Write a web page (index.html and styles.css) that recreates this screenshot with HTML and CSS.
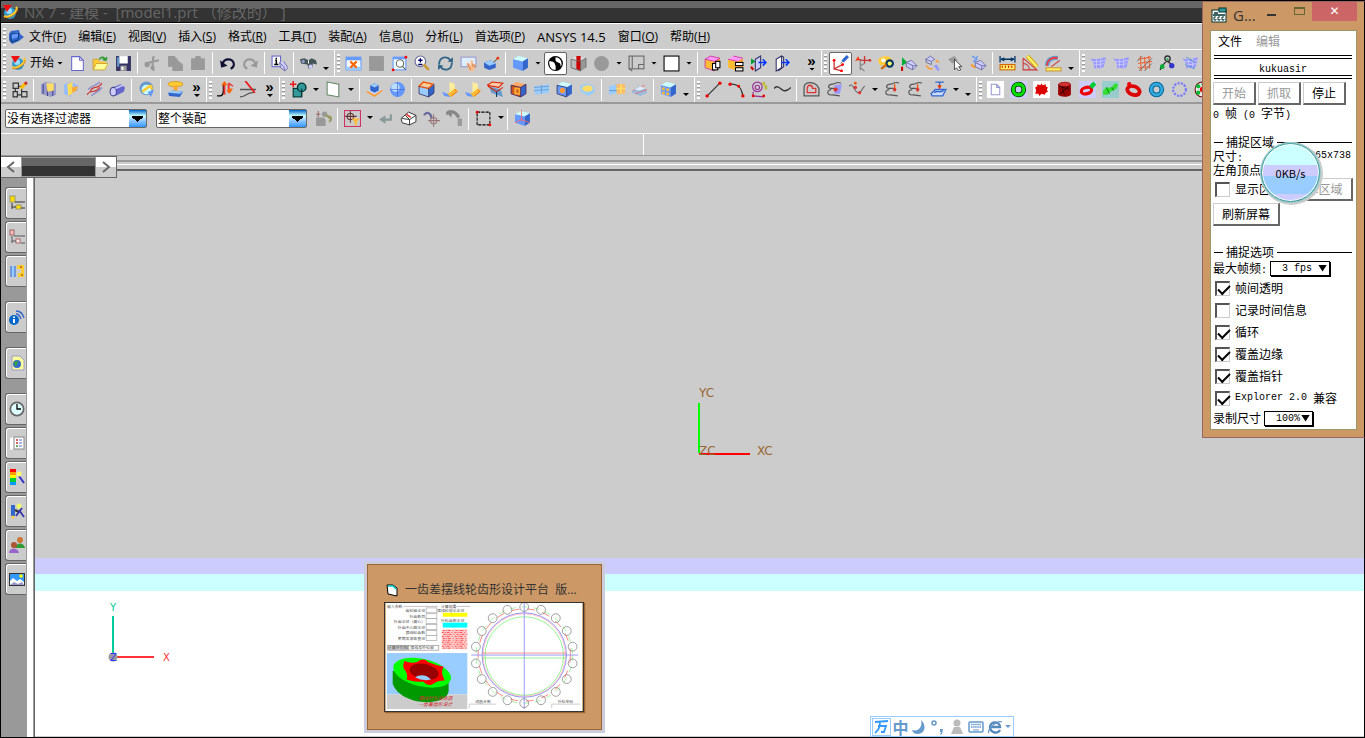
FILE: index.html
```
<!DOCTYPE html>
<html lang="zh">
	<head>
		<meta charset="utf-8">
		<title>NX 7 - 建模</title>
		<link rel="stylesheet" href="styles.css">
	</head>
	<body>
		<div class="app">
			<!--标题栏-->
			<div class="titlebar">
				<span class="ico" data-icon="nx"></span>
				<h1>NX 7 - 建模 -&nbsp; [model1.prt （修改的） ]</h1>
			</div>

			<!--菜单-->
			<div class="menubar">
				<i class="grip"></i>
				<span class="ico" data-icon="part"></span>
				<a href="#">文件(<u>F</u>)</a>
				<a href="#">编辑(<u>E</u>)</a>
				<a href="#">视图(<u>V</u>)</a>
				<a href="#">插入(<u>S</u>)</a>
				<a href="#">格式(<u>R</u>)</a>
				<a href="#">工具(<u>T</u>)</a>
				<a href="#">装配(<u>A</u>)</a>
				<a href="#">信息(<u>I</u>)</a>
				<a href="#">分析(<u>L</u>)</a>
				<a href="#">首选项(<u>P</u>)</a>
				<a href="#" class="wide">ANSYS 14.5</a>
				<a href="#">窗口(<u>O</u>)</a>
				<a href="#">帮助(<u>H</u>)</a>
			</div>

			<!--工具条-->
			<div class="row">
				<div class="bar">
					<i class="grip"></i>
					<button class="start"><span class="ico" data-icon="nx"></span>开始<i class="arrow"></i></button>
					<div class="tools" data-tools="new open save | cut copy paste | undo redo | info | bino _"></div>
				</div>
				<div class="bar">
					<i class="grip"></i>
					<div class="tools" data-tools="fit blank zoomwin zoom rotate pan persp | cube v *shade section disc v sheet v square v | boxcopy boxlink outflag outbox . »"></div>
				</div>
				<div class="bar">
					<i class="grip"></i>
					<div class="tools" data-tools="*csys csys2 palette showhide swap pick hide | ruler angle arcruler _"></div>
				</div>
				<div class="bar last">
					<i class="grip"></i>
					<div class="tools" data-tools="surf surf mesh chain surf2"></div>
				</div>
			</div>
			<div class="row">
				<div class="bar">
					<i class="grip"></i>
					<div class="tools" data-tools="sketch | extrude revolve sweep tube | gauge | table »"></div>
				</div>
				<div class="bar">
					<i class="grip"></i>
					<div class="tools" data-tools="bend trim »"></div>
				</div>
				<div class="bar">
					<i class="grip"></i>
					<div class="tools" data-tools="unite v plane v | datum sphere | blend draft draft rib shell split hole thick | pattern offset | grid _"></div>
				</div>
				<div class="bar">
					<i class="grip"></i>
					<div class="tools" data-tools="line arc circles spline | contour curve1 curve2 v curve3 curve3 project v _"></div>
				</div>
				<div class="bar last">
					<i class="grip"></i>
					<div class="tools" data-tools="page ringg star drum worm bolt ringr ringb gear bearing"></div>
				</div>
			</div>

			<!--选择条-->
			<div class="selbar">
				<select class="combo" aria-label="过滤器"><option>没有选择过滤器</option></select>
				<select class="combo second" aria-label="范围"><option>整个装配</option></select>
				<div class="tools" data-tools="links | snap v back facet snapcurve snapgray | marquee v | cubeline"></div>
			</div>

			<div class="status"><span></span><span></span></div>

			<div class="tabstrip">
				<div class="pager">
					<button aria-label="上一页"><svg viewBox="0 0 16 16"><path d="M11 3L5 8L11 13" fill="none" stroke="#666" stroke-width="2"/></svg></button>
					<div class="track"></div>
					<button aria-label="下一页"><svg viewBox="0 0 16 16"><path d="M5 3L11 8L5 13" fill="none" stroke="#666" stroke-width="2"/></svg></button>
				</div>
				<div class="edge"></div>
			</div>

			<div class="work">
				<div class="side">
					<button class="tab" data-icon="tree" aria-label="装配导航器"></button>
					<button class="tab" data-icon="tree2" aria-label="约束导航器"></button>
					<button class="tab gap" data-icon="reuse" aria-label="重用库"></button>
					<button class="tab gap" data-icon="radio" aria-label="信息"></button>
					<button class="tab gap" data-icon="web" aria-label="浏览器"></button>
					<button class="tab" data-icon="clock" aria-label="历史记录"></button>
					<button class="tab" data-icon="book" aria-label="系统材料"></button>
					<button class="tab" data-icon="rainbow" aria-label="过程向导"></button>
					<button class="tab" data-icon="wizard" aria-label="加工向导"></button>
					<button class="tab" data-icon="people" aria-label="角色"></button>
					<button class="tab" data-icon="picture" aria-label="系统场景"></button>
				</div>
				<div class="canvas">
					<svg class="wcs" viewBox="0 0 90 80">
						<path d="M9 18V68" stroke="#0f0" stroke-width="2"/>
						<path d="M9 69H60" stroke="#f00" stroke-width="2"/>
						<g class="wcsText"><text x="9" y="12">YC</text><text x="9" y="70">ZC</text><text x="67" y="70">XC</text></g>
					</svg>
					<svg class="triad" viewBox="0 0 70 70">
						<path d="M8 16V54" stroke="#0c9" stroke-width="2"/>
						<path d="M12 57H49" stroke="#f33" stroke-width="2"/>
						<circle cx="8" cy="57" r="4.5" fill="#999"/>
						<text x="5" y="11" fill="#0c9">Y</text><text x="5" y="61" fill="#33f">Z</text><text x="58" y="61" fill="#f33">X</text>
					</svg>
				</div>
			</div>
		</div>

		<!--任务栏预览-->
		<div class="preview">
			<div class="previewTitle"><span class="ico" data-icon="form"></span><span>一齿差摆线轮齿形设计平台&nbsp; 版...</span></div>
			<svg class="thumb" viewBox="0 0 200 110">
				<rect width="200" height="110" fill="#fff"/>
				<g class="tiny" text-anchor="end">
					<text x="17" y="5">输入参数</text><text x="40" y="9">齿轮轴半径</text><text x="40" y="15">针齿数目</text><text x="40" y="20">针齿半径（偏心）</text><text x="40" y="26">针齿中心圆半径</text><text x="40" y="32">摆线轮齿数</text><text x="40" y="38">套筒及滚珠直径</text>
					<text x="72" y="5">计算结果</text><text x="80" y="9">摆线轮理论半径</text><text x="80" y="19">针轮齿数半径</text>
				</g>
				<g fill="#fff" stroke="#999" stroke-width=".6"><path d="M18 3.500H53M72 3.500H86"/><rect x="41" y="5" width="11" height="5"/><rect x="41" y="11" width="11" height="5"/><rect x="41" y="16" width="11" height="5"/><rect x="41" y="22" width="11" height="5"/><rect x="41" y="28" width="11" height="5"/><rect x="41" y="33" width="11" height="5"/></g>
				<rect x="58" y="10" width="25" height="4" fill="#ff0"/><rect x="58" y="20" width="25" height="5" fill="#0ff"/>
				<rect x="57" y="27" width="26" height="20" fill="#fcc"/>
				<path d="M58 28H83M57 30H82M59 32H83M57 34H83M58 36H82M58 38H83M57 40H82M59 42H83M57 44H81M58 46H82" stroke="#f55" stroke-width="1" stroke-dasharray="2 1 1 1 3 2 1 2"/>
				<rect x="2" y="43" width="20" height="5" fill="#ccc" stroke="#666" stroke-width=".5"/><rect x="23" y="43" width="31" height="5" fill="#fff" stroke="#666" stroke-width=".5"/>
				<g class="tiny"><text x="2" y="47">计算并作图</text><text x="25" y="47">摆线及外轮廓</text></g>
				<rect x="1" y="51" width="82" height="42" fill="#9cf"/><rect x="1" y="93" width="82" height="15" fill="#ccc"/>
				<path d="M7 69V82C11 94 26 101 42 101C56 101 63 96 64 90V76z" fill="#090"/>
				<ellipse cx="37" cy="71" rx="30" ry="14" transform="rotate(13 37 71)" fill="#0f0"/>
				<path d="M19 59Q26 62 32 60Q38 55 43 60Q50 63 59 65Q55 70 60 79Q52 79 49 82Q43 86 38 80Q30 81 21 78Q23 74 20 69Q16 65 19 59" fill="#f00"/>
				<ellipse cx="39" cy="70" rx="15" ry="8" transform="rotate(12 39 70)" fill="#900"/>
				<path d="M30 76C34 72 42 73 46 78Q38 80 30 76" fill="#9cf"/>
				<g class="slogan"><text x="33" y="99">摆线针轮减速器</text><text x="33" y="105">一齿差齿形设计</text></g>
				<g id="gear" fill="none">
					<circle cx="141" cy="53" r="43" stroke="#66f" stroke-width=".7"/>
					<circle cx="141" cy="54" r="40" stroke="#6e6" stroke-width=".7"/>
					<circle cx="141" cy="53" r="42" stroke="#f88" stroke-width=".5"/>
					<circle cx="141" cy="53" r="47" stroke="#f66" stroke-width=".8" stroke-dasharray="8 8"/>
					<circle cx="141" cy="53" r="49" stroke="#6e6" stroke-width=".6" stroke-dasharray="6 6"/>
					<path d="M87 53H196M141 0V108" stroke="#99f"/><path d="M98 51H184" stroke="#f66" stroke-width=".7"/><path d="M98 56H184" stroke="#6e6" stroke-width=".7"/>
				</g>
				<g class="tiny"><text x="91" y="102">动画步数</text><text x="175" y="102">针轮坐标</text></g>
				<path d="M85 107V103H112M169 107V103H198" fill="none" stroke="#999" stroke-width=".5"/>
			</svg>
		</div>

		<!--输入法-->
		<div class="ime">
			<button class="on" data-icon="wan" aria-label="万能"></button>
			<button>中</button>
			<button data-icon="moon" aria-label="半角"></button>
			<button data-icon="punct" aria-label="标点"></button>
			<button data-icon="user" aria-label="用户"></button>
			<button data-icon="keys" aria-label="软键盘"></button>
			<button data-icon="ie" aria-label="浏览器"></button>
			<button class="drop-more" aria-label="更多"><i class="arrow"></i></button>
		</div>

		<!--录屏窗口-->
		<div class="recorder">
			<div class="recTitle">
				<span class="ico" data-icon="gif"></span><span class="name">G...</span>
				<button class="min" aria-label="最小化"></button><button class="max" aria-label="最大化"></button><button class="close" aria-label="关闭">✕</button>
			</div>
			<div class="recBody">
				<div class="recMenu"><a href="#">文件</a><a href="#" class="off">编辑</a></div>
				<div class="user"><span class="en">kukuasir</span></div>
				<div class="btns"><button disabled>开始</button><button disabled>抓取</button><button>停止</button></div>
				<p class="frames"><span class="en">0 </span>帧<span class="en"> (0 </span>字节<span class="en">)</span></p>
				<h2>捕捉区域</h2>
				<p class="line"><span>尺寸<span class="en">:</span></span><span class="en">1365x738</span></p>
				<p class="line"><span>左角顶点<span class="en">:</span></span></p>
				<div class="area"><label class="check"><input type="checkbox">显示区域</label><button disabled>选择区域</button></div>
				<button class="refresh">刷新屏幕</button>
				<h2>捕捉选项</h2>
				<div class="field"><label for="fps">最大帧频<span class="en">:</span></label><span class="drop"><select id="fps"><option>3 fps</option></select></span></div>
				<label class="check"><input type="checkbox" checked>帧间透明</label>
				<label class="check"><input type="checkbox">记录时间信息</label>
				<label class="check"><input type="checkbox" checked>循环</label>
				<label class="check"><input type="checkbox" checked>覆盖边缘</label>
				<label class="check"><input type="checkbox" checked>覆盖指针</label>
				<label class="check"><input type="checkbox" checked><span class="en">Explorer 2.0 </span>兼容</label>
				<div class="field size"><label for="size">录制尺寸</label><span class="drop"><select id="size"><option>100%</option></select></span></div>
			</div>
			<div class="ball">0KB/s</div>
		</div>

		<script type="text/javascript" src="icons.js"></script>
	</body>
</html>
```
FILE: styles.css
```
* {
	margin: 0;
	padding: 0;
	box-sizing: border-box;
}

body {
	background: #ccc;
	color: #000;
	font: 12px/16px "Open Sans", "Noto Sans CJK SC", sans-serif;
	position: relative;
	height: 100vh;
	overflow: hidden;
}

button,
select,
input {
	font: inherit;
	color: inherit;
	background: none;
	border: none;
	border-radius: 0;
	appearance: none;
}

a {
	color: inherit;
	text-decoration: none;
}

svg {
	display: block;
}

.ico svg {
	width: 16px;
	height: 16px;
}

.app {
	display: flex;
	flex-direction: column;
	height: 100vh;
	border: 1px solid #000;
}

/* 标题栏 */
.titlebar {
	display: flex;
	align-items: center;
	height: 22px;
	flex: none;
	padding-left: 1px;
	gap: 6px;
	background: linear-gradient(#666 7px, #333 7px);
	border-bottom: 1px solid #000;
	overflow: hidden;
}

.titlebar h1 {
	font-size: 15px;
	font-weight: normal;
	line-height: 20px;
	color: #666;
}

/* 菜单 */
.menubar {
	display: flex;
	align-items: center;
	height: 27px;
	flex: none;
	border-top: 1px solid #fff;
	border-bottom: 1px solid #fff;
	white-space: nowrap;
}

.menubar .ico {
	margin-right: 5px;
}

.menubar a {
	margin-right: 12px;
}

.menubar .wide {
	font-size: 13px;
}

/* 工具条 */
.row {
	display: flex;
	height: 27px;
	flex: none;
	overflow: hidden;
	border-bottom: 1px solid #fff;
}

.row + .row {
	border-bottom: 2px solid #999;
}

.bar {
	display: flex;
	align-items: center;
	flex: none;
	padding-right: 2px;
	border-right: 1px solid #fff;
}

.last {
	border: none;
}

.grip {
	width: 3px;
	height: 18px;
	margin: 0 2px;
	flex: none;
	background: repeating-linear-gradient(#fff 0 2px, #999 2px 3px, #ccc 3px 4px);
}

.tools {
	display: flex;
	align-items: center;
	height: 100%;
}

.tool {
	width: 23px;
	height: 23px;
	padding: 3px;
	flex: none;
}

.tool svg {
	width: 17px;
	height: 17px;
}

.selected {
	background: #fff;
	border: 1px solid #666;
	border-radius: 2px;
	padding: 2px;
}

.sep {
	width: 1px;
	height: 22px;
	margin: 0 3px 0 2px;
	background: #fff;
}

.arrow {
	width: 12px;
	height: 3px;
	background: #000;
	clip-path: polygon(3px 0, 9px 0, 6px 3px);
}

.low {
	align-self: flex-end;
	margin-bottom: 6px;
}

.space {
	width: 9px;
}

.more {
	width: 17px;
	padding-left: 2px;
	font: bold 15px/10px "Liberation Sans", sans-serif;
	text-align: center;
}

.more .arrow {
	display: block;
	margin: 2px 0 0 2px;
}

.start {
	display: flex;
	align-items: center;
	width: 58px;
	gap: 4px;
	padding-left: 2px;
	white-space: nowrap;
}

.start .arrow {
	margin-left: -4px;
	flex: none;
}

/* 选择条 */
.selbar {
	display: flex;
	align-items: center;
	height: 30px;
	flex: none;
	padding-left: 4px;
	border-bottom: 1px solid #fff;
}

.combo {
	width: 142px;
	height: 19px;
	padding-left: 1px;
	border: 1px solid #666;
	border-radius: 2px;
	background-image: conic-gradient(from -50deg at 50% 100%, #000 100deg, #0000 0), linear-gradient(#06c, #cff 35%, #9cf 60%, #39f), linear-gradient(#fff, #fff);
	background-repeat: no-repeat;
	background-position: right 3px top 6px, right, left;
	background-size: 11px 6px, 17px 100%, 100% 100%;
}

.second {
	width: 151px;
	margin: 0 5px 0 9px;
}

.selbar .arrow {
	width: 10px;
	margin-bottom: 2px;
}

.status {
	display: flex;
	height: 22px;
	flex: none;
	border-bottom: 1px solid #999;
}

.status span {
	flex: 1;
}

.status span:first-child {
	flex: 0 0 643px;
	border-right: 1px solid #fff;
}

.tabstrip {
	display: flex;
	height: 22px;
	flex: none;
}

.pager {
	display: flex;
	width: 116px;
	border: 1px solid #666;
	border-left: none;
}

.pager button {
	width: 20px;
	padding: 2px;
	background: linear-gradient(#fff 50%, #ccc 50%);
}

.pager .track {
	flex: 1;
	border: 1px solid #999;
	background: linear-gradient(#666 8px, #333 8px);
}

.edge {
	flex: 1;
	background: linear-gradient(#ccc 4px, #999 4px 6px, #ccc 6px 8px, #fff 8px 9px, #ccc 9px 13px, #666 13px 15px, #ccc 15px);
}

/* 工作区 */
.work {
	display: flex;
	flex: 1;
	min-height: 0;
}

.side {
	width: 34px;
	padding: 9px 0 0 4px;
	background: linear-gradient(90deg, #999 26px, #fff 26px 32px, #999 32px 33px, #666 33px);
}

.tab {
	display: block;
	width: 21px;
	height: 32px;
	margin-bottom: 2px;
	padding: 0 0 0 3px;
	background: #ccc;
	border: 1px solid #666;
	border-right: none;
	border-radius: 3px 0 0 3px;
	box-shadow: inset 1px 1px #fff;
}

.tab.gap {
	margin-bottom: 14px;
}

.tab svg {
	width: 16px;
	height: 16px;
}

.canvas {
	flex: 1;
	position: relative;
	background: linear-gradient(#ccc 380px, #ccf 380px 396px, #cff 396px 413px, #fff 413px);
	border-bottom: 1px solid #ccc;
}

.wcs {
	position: absolute;
	left: 655px;
	top: 207px;
	width: 90px;
	height: 80px;
}

.wcsText {
	font: 12px "DejaVu Sans", sans-serif;
	fill: #963;
}

.triad {
	position: absolute;
	left: 70px;
	top: 422px;
	width: 70px;
	height: 70px;
	font: 10px "DejaVu Sans", sans-serif;
}

/* 任务栏预览 */
.preview {
	position: absolute;
	left: 367px;
	top: 564px;
	width: 235px;
	padding: 16px 16px 17px;
	background: #c96;
	border: 1px solid #963;
	box-shadow: 0 0 0 3px #ccd;
}

.previewTitle {
	display: flex;
	align-items: center;
	gap: 5px;
	height: 18px;
	margin-bottom: 3px;
	white-space: nowrap;
	color: #333;
}

.thumb {
	width: 200px;
	height: 110px;
	border: 1px solid #333;
	box-shadow: 1px 1px 1px #963;
}

.tiny {
	font-size: 4px;
	fill: #555;
}

.slogan {
	font: italic 5px "Noto Sans CJK SC", sans-serif;
	fill: #c33;
}

/* 输入法 */
.ime {
	position: absolute;
	left: 870px;
	bottom: 1px;
	height: 21px;
	display: flex;
	align-items: center;
	background: #fff;
	border: 1px solid #9cf;
	padding-left: 1px;
	color: #69c;
}

.ime button {
	width: 19px;
	height: 18px;
	padding: 1px;
	font: bold 16px/16px "Noto Sans CJK SC", sans-serif;
}

.ime svg {
	width: 16px;
	height: 16px;
}

.ime .on {
	border: 1px solid #9cf;
	padding: 0;
}

.ime .drop-more {
	width: 8px;
}

.ime .arrow {
	display: block;
	background: #69c;
	margin-left: -4px;
}

/* 录屏窗口 */
.recorder {
	position: absolute;
	right: 0;
	top: 1px;
	width: 163px;
	padding: 0 7px 7px;
	background: #c96;
	border: 1px solid #966;
	border-right-color: #000;
	font-family: "Noto Sans CJK SC", sans-serif;
}

.recTitle {
	display: flex;
	height: 28px;
	padding-left: 1px;
	white-space: nowrap;
}

.recTitle .ico {
	padding-top: 5px;
	margin-right: 6px;
}

.recTitle .name {
	font: 15px/26px "Open Sans", sans-serif;
	color: #333;
	flex: 1;
}

.min {
	width: 9px;
	height: 2px;
	margin: 12px 18px 0 0;
	background: #333;
}

.max {
	width: 11px;
	height: 8px;
	margin: 5px 7px 0 0;
	border: 1px solid #663;
	border-top-width: 2px;
}

.close {
	width: 45px;
	height: 19px;
	background: #c66;
	color: #fff;
	font: 12px/19px "DejaVu Sans", sans-serif;
}

.recBody {
	background: #fff;
	border: 1px solid #996;
	padding: 0 3px 2px 2px;
	white-space: nowrap;
}

.en {
	font: 10px/12px "Liberation Mono", monospace;
	white-space: pre;
}

.recMenu {
	display: flex;
	gap: 14px;
	padding: 2px 5px 6px;
}

.off {
	color: #999;
}

.user {
	margin: 0 1px;
	border: double #000;
	border-width: 4px 0;
	text-align: center;
	height: 24px;
	line-height: 16px;
}

.btns {
	display: flex;
	gap: 2px;
	padding: 3px 0 0;
}

.recBody button {
	height: 23px;
	width: 43px;
	background: #fff;
	border: 1px solid #ccc;
	border-right: 2px solid #666;
	border-bottom: 2px solid #666;
}

.recBody button:disabled {
	color: #999;
}

.frames {
	height: 30px;
}

h2 {
	display: flex;
	align-items: center;
	gap: 3px;
	height: 14px;
	font-size: 12px;
	font-weight: normal;
}

h2::before,
h2::after {
	content: "";
	height: 1px;
	width: 9px;
	margin-left: 1px;
	background: #000;
}

h2::after {
	flex: 1;
	margin: 0 1px 0 0;
}

.line {
	display: flex;
	align-items: center;
	justify-content: space-between;
	height: 14px;
	padding-right: 2px;
}

.area {
	display: flex;
	align-items: center;
	justify-content: space-between;
	height: 24px;
}

.area button {
	width: 68px;
}

.recBody .refresh {
	display: block;
	width: 67px;
	margin: 2px 0 19px;
}

.check {
	display: flex;
	align-items: center;
	height: 22px;
	padding-left: 2px;
}

.check input {
	width: 15px;
	height: 15px;
	margin-right: 5px;
	border: 1px solid #ccc;
	border-top: 2px solid #555;
	border-left: 2px solid #555;
}

.check input:checked::before {
	content: "";
	display: block;
	width: 10px;
	height: 5px;
	margin: 2px 0 0 1px;
	border: solid #000;
	border-width: 0 0 2px 2px;
	transform: rotate(-45deg);
}

.field {
	display: flex;
	align-items: center;
	gap: 3px;
	height: 18px;
}

.drop {
	display: flex;
	align-items: center;
	position: relative;
	height: 15px;
	width: 60px;
	border: 1px solid #000;
	box-shadow: 1px 1px #000;
}

.drop select {
	width: 100%;
	padding-left: 11px;
	font: 10px/13px "Liberation Mono", monospace;
}

.drop::after {
	content: "";
	position: absolute;
	right: 2px;
	top: 3px;
	width: 9px;
	height: 7px;
	background: #000;
	clip-path: polygon(0 0, 100% 0, 50% 100%);
}

.size .drop {
	width: 49px;
}

.ball {
	position: absolute;
	left: 58px;
	top: 141px;
	width: 59px;
	height: 59px;
	border: 1px solid #399;
	border-radius: 50%;
	background: linear-gradient(#cff 21px, #ccf 21px 32px, #9cf 32px 50px, #ccf 50px);
	box-shadow: inset 0 0 0 1px #fff, 0 0 0 1px #9cc, 1px 1px 0 2px #ccc;
	font-size: 11px;
	line-height: 58px;
	text-align: center;
}
```
FILE: icons.js
```
// 三面立方体: 顶面, 左面, 右面
function cube(a, b, c) {
	return '<path d="M1 4L6 1L15 3L10 6z" fill="' + a + '"/><path d="M1 4L10 6V15L1 12z" fill="' + b + '"/><path d="M10 6L15 3V12L10 15z" fill="' + c + '"/>';
}
// 线条
function ln(d, c, w) {
	return '<path d="' + d + '" fill="none" stroke="' + c + '" stroke-width="' + (w || 1) + '"/>';
}
// 填充
function fl(d, c) {
	return '<path d="' + d + '" fill="' + c + '"/>';
}
function dot(x, y, c, r) {
	return '<circle cx="' + x + '" cy="' + y + '" r="' + (r || 1.3) + '" fill="' + c + '"/>';
}
function box(x, y, w, h, c, s) {
	return '<rect x="' + x + '" y="' + y + '" width="' + w + '" height="' + h + '" fill="' + c + '"' + (s ? ' stroke="' + s + '"' : '') + '/>';
}

var blue = cube('#cff', '#69f', '#36c');
var eraser = fl('M5 7L10 5L15 10L11 14L5 11z', '#ccf') + ln('M5 7L11 10L15 10M11 10V14L5 11V7L10 5L15 10L11 14', '#669', .8);
var hook = ln('M14 2C10 0 9 3 6 3C2 3 1 7 5 7H9M5 8C0 9 1 14 6 13L13 14', '#555', 1.1);
var surf = fl('M0 3C5 5 10 3 15 2L13 11C10 14 6 11 4 13C4 8 3 6 0 3', '#99f') + ln('M2 6C7 7 11 6 14 5M4 9C8 9 11 9 13 8M6 4V12M10 3V12', '#ccf', .8);

var icons = {
	nx: dot(8, 9, '#39c', 6) + dot(7, 7, '#9df', 3) + ln('M2 12C7 15 17 7 14 3', '#fc3', 2.2) + ln('M2 13C8 16 16 9 15 5', '#c60', .7) + fl('M1 1L10 1L5 8z', '#e11'),
	part: fl('M3 2L11 1L12 5L16 8L11 12L4 15L1 11V5z', '#36c') + fl('M3 5L10 3V8L4 10z', '#69f') + ln('M3 5L11 4L10 11L3 13z', '#036', .8),
	'new': fl('M2 1H10L14 5V15H2z', '#fff') + ln('M2.5 1.5H10L13.5 5V14.5H2.5zM10 1V5H14', '#66c'),
	open: fl('M1 4H6L7 6H13V14H1z', '#fc3') + fl('M4 8H16L12 14H1z', '#ff9') + ln('M1 14V4H6L7 6M4 8H15L12 14H1z', '#c93', .8) + ln('M7 4C9 1 12 2 13 5M10 4L13 5L14 2', '#393', 1.5),
	save: box(1, 1, 14, 14, '#336') + box(4, 1, 8, 7, '#fff') + box(5, 10, 6, 5, '#999') + box(6, 11, 2, 3, '#fff') + box(2, 2, 2, 9, '#69c'),
	cut: ln('M1 8L14 5M9 1L8 8L9 15', '#999', 2) + dot(3, 9, '#999', 2.5) + dot(8, 12, '#999', 2),
	copy: fl('M1 1H7L10 4V11H1z', '#999') + fl('M5 5H10L15 9V15H5z', '#999'),
	paste: fl('M1 3H5V1H10V3H14V14H1z', '#999'),
	undo: ln('M3 9C5 2 14 3 14 9C14 11 13 12 11 13', '#113', 2) + fl('M1 5L2 12L8 10z', '#113'),
	redo: ln('M13 9C11 2 2 3 2 9C2 11 3 12 5 13', '#999', 2) + fl('M15 5L14 12L8 10z', '#999'),
	info: box(1, 1, 8, 10, '#fff', '#66c') + ln('M4 5H5V9M3 9H7M5 2.500V3.800', '#000', 1.4) + fl('M8 7L12 6L16 12L13 15L9 12z', '#ccf') + ln('M8 7L12 11L13 15L9 12zM12 6L16 12L13 15', '#669', .8),
	bino: fl('M0 4L4 3L8 5L11 3L15 5L16 9L12 8L12 12L8 13L7 9L1 8z', '#455') + dot(10, 11, '#ccf', 2) + dot(3, 6, '#99c', 1.5) + ln('M8 5V8', '#fff'),
	fit: box(1, 2, 14, 12, '#fff', '#69f') + box(1, 2, 14, 3, '#69f') + box(1, 11, 14, 3, '#9cf') + ln('M5 6L11 12M11 6L5 12', '#f60', 2),
	blank: box(1, 1, 14, 14, '#999'),
	zoomwin: box(2, 2, 12, 12, '#eff', '#69f') + box(2, 2, 12, 2, '#69f') + dot(8, 8, '#fff', 3.5) + ln('M11 11L14 14M5 8A3.5 3.5 0 1 0 12 8A3.5 3.5 0 1 0 5 8', '#666') + dot(14, 2, '#f00') + dot(2, 14, '#f00'),
	zoom: dot(6, 6, '#fff', 5) + ln('M6 1A5 5 0 1 0 6 11A5 5 0 1 0 6 1', '#669') + ln('M6 3V7M4 5H8M4 9H8', '#006', 1.3) + ln('M9 9L14 14', '#c93', 2.5),
	rotate: ln('M2 9C2 2 9 0 13 5M14 7C14 14 7 16 3 11', '#368', 1.7) + fl('M10 6L15 7L15 2zM6 10L1 9L1 14z', '#368'),
	pan: box(1, 2, 14, 9, '#def', '#99c') + fl('M6 8L8 7L10 10V5L12 5L12 8L15 9L13 15H9z', '#fb8') + ln('M7 8L10 14M12 8V11M14 9V12', '#a64', .7),
	persp: fl('M1 7L7 5L12 8V12L6 14L1 12z', '#36c') + fl('M1 7L7 5L12 8L6 10z', '#9cf') + ln('M10 7L14 3', '#666') + dot(14, 3, '#f30'),
	cube: blue,
	shade: dot(8, 8, '#000', 7) + fl('M8 2C13 2 15 8 13 11C13 6 9 8 8 5z', '#fff') + fl('M2 6C6 5 9 8 8 14C4 14 2 11 2 6', '#fff') + fl('M8 9C9 8 11 8 12 9L10 13z', '#000'),
	section: cube('#ddd', '#bbb', '#999') + fl('M6 1H10V15L6 13z', '#c00') + ln('M1 4L10 6V15L1 12zM10 6L15 3V12', '#666', .8),
	disc: dot(8, 8, '#999', 7),
	sheet: box(1, 1, 14, 12, '#ccc', '#666') + ln('M4 1V13M10 13V9H15M1 13L4 15', '#666'),
	square: box(1, 1, 14, 14, '#fff', '#000'),
	boxcopy: cube('#f9f', '#fb3', '#f93') + ln('M1 4L10 6V15L1 12zL6 1L15 3L10 6', '#c39', .8) + box(8, 8, 5, 6, '#fff', '#000') + box(11, 6, 4, 6, '#fff', '#000'),
	boxlink: cube('#f9f', '#fb3', '#f93') + ln('M1 4L10 6M6 1L15 3', '#c39', .8) + box(8, 7, 7, 3, '#fff', '#000') + box(8, 12, 7, 3, '#fff', '#000'),
	outflag: fl('M1 3L5 6L1 9z', '#093') + ln('M1 11L3 14', '#c00', 2) + fl('M5 4L10 1V12L5 15z', '#ccf') + ln('M5 4L10 1V12L5 15z', '#336') + ln('M8 7H14M12 4L15 7L12 10', '#03f', 1.4),
	outbox: fl('M3 4L8 1V12L3 15z', '#fff') + ln('M3 4L8 1V12L3 15zM8 1L10 2V11L5 15', '#336') + ln('M8 7H14M12 4L15 7L12 10', '#03f', 1.4),
	csys: ln('M2 5V13L10 9M2 13L9 15', '#c33', 1.2) + dot(2, 5, '#f00') + dot(10, 9, '#f00') + dot(9, 15, '#f00') + ln('M8 8L11 5', '#999') + ln('M10 6L15 1', '#36c', 3),
	csys2: ln('M5 5V14M5 10L9 8M5 12L9 15', '#888', 1.2) + ln('M2 4L7 5L14 5M9 1V8', '#c33', 1.2) + fl('M0 6L4 4L3 1z', '#f30') + dot(14, 5, '#c33'),
	palette: fl('M0 5C2 0 11 0 13 4L11 11L4 9L2 10z', '#fc3') + dot(5, 5, '#fff', 2) + dot(11, 8, '#036', 4) + dot(11, 8, '#ff6', 2) + ln('M3 13L8 9', '#c60', 2),
	showhide: fl('M1 2L6 7L1 10z', '#0a3') + ln('M1 11V15', '#c00', 2) + eraser,
	swap: fl('M1 4L6 1L10 4L7 8z', '#ccf') + ln('M1 4L7 6L10 4M7 6V9L2 7V4L6 1L10 4', '#669', .8) + ln('M2 10L5 13H8M11 5L14 7', '#f93', 1.5) + fl('M9 10L12 9L15 14L13 15z', '#99f'),
	pick: fl('M1 4L7 1L10 5L5 8z', '#999') + fl('M7 4V14L9 12L11 16L13 15L11 11H14z', '#fff') + ln('M7 4V14L9 12L11 15L13 14L11 11H14z', '#333', .8),
	hide: ln('M2 1L5 3M3 6L7 4M7 1L4 7', '#69f', 1.3) + ln('M1 9L5 12', '#f93', 2) + eraser,
	ruler: ln('M1 1V7M15 1V7M2 4H14', '#036', 1.2) + fl('M1 4L5 2V6zM15 4L11 2V6z', '#036') + box(1, 9, 14, 5, '#fe6', '#c60') + ln('M3 10V12M6 10V12M9 10V12M12 10V12', '#c00'),
	angle: ln('M1 3V14H14L1 3M1 8C5 8 7 11 7 14', '#c33') + ln('M5 1L14 11', '#c90', 4) + ln('M5 1L14 11', '#fe6', 2.5),
	arcruler: ln('M2 10C2 4 7 2 12 3', '#69c', 4) + ln('M2 10C2 4 7 2 12 3', '#f33', 1.5) + box(1, 12, 14, 3, '#fe6', '#c93') + ln('M6 11L14 5', '#c33'),
	surf: surf,
	mesh: ln('M2 4L14 2M2 8L15 6M2 12L13 11M4 1L5 15M8 2L9 14M12 1L13 13', '#e63', 1) + ln('M1 6L6 1M8 15L15 8M3 15L15 3', '#666', .8),
	chain: ln('M8 1A2.5 2.500 0 1 0 8 6A2.5 2.500 0 1 0 8 1M7 6L3 10L1 14M8 6L12 9', '#333', 1.3) + dot(3, 11, '#0a3', 2.2) + dot(12, 10, '#33c', 2.5) + dot(8, 4, '#0a3', 1),
	surf2: surf + ln('M4 2L12 7M3 9L12 13', '#69c'),
	sketch: ln('M2 2H7V7H2zM2 10H6V15H2zM10 10H15V15H10zM7 5H10V10M4 7V10M6 13H10', '#333', 1.1) + ln('M9 7L14 2', '#fb0', 3) + dot(14, 2, '#c33', 1.5),
	extrude: fl('M1 3L5 1L15 2V13L10 15L1 12z', '#99c') + ln('M3 3V12M7 4V14M12 3V14', '#448') + fl('M6 2L13 2V9L7 10z', '#fd6'),
	revolve: fl('M1 3L8 1L14 4L14 9L9 11L7 15L1 12z', '#9bf') + fl('M4 3L9 1V12L5 14z', '#fd5') + fl('M8 6L14 5L13 9L9 11z', '#fa3'),
	sweep: ln('M1 13C4 7 8 13 13 6M4 10C6 3 11 9 15 2', '#c33', 1.1) + ln('M2 8C7 3 9 5 13 1M5 14C9 10 12 11 15 6', '#88c', 1.2),
	tube: fl('M3 6L11 3L15 6L14 10L6 14L1 12z', '#66c') + '<ellipse cx="4" cy="10" rx="3" ry="4" fill="#ccf" stroke="#448"/>' + ln('M6 7L13 4', '#ccf', 1.5),
	gauge: dot(8, 7, '#69c', 6.5) + dot(8, 8, '#cff', 4.5) + ln('M4 10L12 4M12 4L13 8', '#fc3', 2.5) + fl('M9 10L15 9L12 15z', '#69f'),
	table: '<ellipse cx="8" cy="3" rx="7" ry="2.5" fill="#fc3" stroke="#c80" stroke-width=".6"/>' + box(6, 4, 4, 6, '#fa3') + fl('M1 11L6 9L15 10L12 15L2 14z', '#36c') + fl('M1 11L6 9L15 10L12 12z', '#9cf'),
	bend: ln('M0 14H3C7 14 6 7 6 3', '#000', 1.3) + ln('M7 13V2M11 2V11', '#e33', 1.8) + fl('M4 4L7 0L10 4zM12 7L15 7L12 12L9 9z', '#f60') + ln('M11 2L15 5', '#e33', 1.3),
	trim: ln('M0 8H15M0 15C7 15 6 10 13 11', '#555', 1.2) + ln('M5 0L14 11', '#e11', 1.6),
	unite: ln('M3 0V6M0 3H6', '#e11', 1.3) + box(3, 7, 8, 8, '#399', '#033') + dot(11, 6, '#399', 4) + ln('M11 2A4 4 0 1 0 11 10A4 4 0 1 0 11 2', '#033', 1.3) + ln('M11 7V15', '#033'),
	plane: fl('M2 1L13 3V15L2 13z', '#fff') + ln('M2 1L13 3V15L2 13z', '#686'),
	datum: fl('M0 10L8 6L16 9L8 15z', '#f93') + fl('M1 9L8 6L15 8L8 13z', '#cdf') + fl('M4 4L8 2L12 4V9L8 11L4 9z', '#36c') + fl('M4 4L8 2L12 4L8 6z', '#9cf'),
	sphere: dot(8, 8, '#69f', 7) + dot(6, 6, '#bdf', 4) + ln('M8 1V15M1 8H15', '#46c', .6),
	blend: cube('#fc9', '#9cf', '#36c') + ln('M1 5L5 1L14 3L10 7z', '#e50', 1.3) + ln('M1 5V12L10 15V7M15 3V11L10 15', '#336', .8),
	draft: fl('M8 1L13 3V9L8 12z', '#fe9') + fl('M13 7L16 9L10 15L2 13L8 11z', '#fb3') + fl('M1 10L6 12L9 15L3 14z', '#69f') + ln('M13 8L15 10L10 14', '#e60', .8),
	rib: fl('M2 5L13 8L15 15L4 11z', '#69c') + fl('M0 4L5 1L15 2L11 6z', '#fca') + ln('M0 4L11 6L15 2L5 1zM1 5L9 10L15 6', '#d20', 1) + ln('M9 10V15', '#036'),
	shell: cube('#fa6', '#c52', '#36c') + ln('M5 7H9V12H5z', '#fa3', 2) + ln('M1 4L10 6V15L1 12zM10 6L15 3V12L10 15', '#425', .8),
	split: fl('M1 5L15 3V11L2 13z', '#9cf') + ln('M1 6L15 5M1 9L15 8M8 4V12', '#69c', .8),
	hole: blue + dot(6, 9, '#f93', 2.5) + ln('M1 4L10 6V15L1 12z', '#336', .8),
	thick: fl('M1 5L7 2L14 5L15 10L9 14L2 10z', '#9cf') + '<ellipse cx="8" cy="7" rx="5" ry="3" fill="#fd6"/>',
	pattern: fl('M1 5L9 3V11L1 13z', '#9cf') + fl('M8 3H16V12H8z', '#fb6') + ln('M12 3V12M8 7H16', '#fd6', 1.5) + ln('M1 9H8', '#69c'),
	offset: fl('M1 9L8 5L15 8V11L9 14L1 11z', '#9bd') + ln('M2 9L13 4M4 12L15 8', '#e66', .8) + fl('M3 8L9 5L13 7L8 9z', '#def'),
	grid: blue + box(2, 6, 2.5, 2.5, '#fb3') + box(6, 7, 2.5, 2.5, '#fb3') + box(2, 10, 2.5, 2.5, '#fb3') + box(6, 11, 2.5, 2.5, '#fb3'),
	line: ln('M2 14L14 2', '#333', 1.2) + dot(2, 14, '#e00', 1.6) + dot(14, 2, '#e00', 1.6),
	arc: ln('M2 3C9 2 13 7 14 14', '#333', 1.2) + dot(2, 3, '#e00', 1.6) + dot(14, 14, '#e00', 1.6) + dot(10, 5, '#e00', 1.4),
	circles: ln('M6 1A4.5 4.5 0 1 0 6 10A4.5 4.5 0 1 0 6 1M6 4A2 2 0 1 0 6 8A2 2 0 1 0 6 4M2 10V14L12 15', '#939', 1.1) + ln('M12 1V4M14 4V8', '#bb3', 2.5) + dot(2, 14, '#e00') + dot(12, 14, '#e00'),
	spline: ln('M0 7C4 3 6 8 9 9S14 8 16 6', '#333', 1.3),
	contour: ln('M1 14V6C1 0 12 0 15 7V14z', '#555', 1.2) + ln('M4 11V7C4 3 9 3 9 7H12V11z', '#d33', 1.2),
	curve1: hook + fl('M8 4L15 3L13 12H8z', '#99f') + dot(9, 8, '#d33', 2),
	curve2: ln('M0 5C4 0 5 12 9 11S12 6 15 5', '#666') + dot(6, 6, '#d33', 1.6) + dot(10, 11, '#d33', 1.5) + dot(6, 2, '#e50'),
	curve3: hook + ln('M10 3V10', '#e50', 1.3) + dot(10, 8, '#d33', 1.6),
	project: ln('M5 1H13M9 1V5', '#36c', 1.2) + fl('M1 12L5 7H15L12 14H2z', '#cdf') + ln('M1 12L5 8H15L12 14H2zM4 11C7 8 9 12 13 9', '#36c', 1.2) + fl('M7 4H11L9 8z', '#e30'),
	page: box(0, 0, 16, 16, '#fff') + ln('M4 3H9L12 6V13H4zM9 3V6H12', '#99c'),
	ringg: box(0, 0, 16, 16, '#ccf') + ln('M8 3A5 5 0 1 0 8 13A5 5 0 1 0 8 3', '#030', 4.5) + ln('M8 3A5 5 0 1 0 8 13A5 5 0 1 0 8 3', '#0d0', 3),
	star: box(0, 0, 16, 16, '#fff') + fl('M8 2L9 4L12 3L12 5L14 6L13 8L14 10L12 11L11 13L8 12L6 14L5 12L2 12L3 9L2 6L4 5L4 3L7 4z', '#d00'),
	drum: fl('M2 3C5 0 12 0 14 3V13C11 16 4 15 2 13z', '#900') + ln('M3 5L13 8M4 12L12 5M5 3L8 13', '#400') + '<ellipse cx="8" cy="3" rx="5" ry="1.800" fill="#c33"/>',
	worm: box(0, 0, 16, 16, '#ccf') + '<ellipse cx="7" cy="9" rx="5" ry="3" transform="rotate(-15 7 9)" fill="none" stroke="#e00" stroke-width="3"/>' + ln('M11 6L15 2', '#0c3', 4),
	bolt: box(0, 0, 16, 16, '#9cc') + fl('M1 9L4 6L9 6L12 2L15 3L14 7L8 10L5 13L1 13z', '#3d3') + ln('M4 6L7 12M9 6L11 9', '#090'),
	ringr: '<ellipse cx="8" cy="9" rx="6" ry="4" transform="rotate(20 8 9)" fill="none" stroke="#d00" stroke-width="3.5"/>' + dot(4, 3, '#e00', 2),
	ringb: ln('M8 3A5 5 0 1 0 8 13A5 5 0 1 0 8 3', '#069', 4.5) + ln('M8 3A5 5 0 1 0 8 13A5 5 0 1 0 8 3', '#3ad', 2.5),
	gear: '<circle cx="8" cy="8" r="6" fill="none" stroke="#77f" stroke-width="2" stroke-dasharray="2 1.200"/>',
	bearing: dot(8, 8, '#eee', 7.5) + ln('M8 1A7 7 0 1 0 8 15A7 7 0 1 0 8 1', '#600') + dot(4, 5, '#0b3', 2) + dot(4, 11, '#0b3', 2) + dot(9, 3, '#0b3', 2) + dot(8, 8, '#e00', 2.5),
	links: ln('M3 1V7M1 4H5', '#966') + fl('M1 7H8L10 9V15H1z', '#999') + dot(9, 4, '#999', 2.5) + ln('M10 4L14 8M12 6A2 2 0 1 1 13 11', '#996', 2),
	snap: box(0.5, 0.5, 15, 15, '#ccc', '#c36') + ln('M6 1V12M1 6H12M6 3A3 3 0 1 0 6 9A3 3 0 1 0 6 3', '#633') + fl('M7 8H15L12 11V15L10 14V11z', '#fb3'),
	back: ln('M13 4V9H6', '#899', 2) + fl('M2 9L8 5V13z', '#899'),
	facet: fl('M1 8L8 2L15 5V11L9 14L2 12z', '#fff') + ln('M1 8L8 2L15 5V11L9 14L2 12zM2 8L9 9V14M9 9L15 5M5 5L9 9', '#333', .9) + ln('M6 4L10 7', '#e33', 1.5),
	snapcurve: ln('M1 5C4 0 8 4 8 8', '#669', 2) + ln('M10 4V16M5 10H16M10 7A3 3 0 1 0 10 13A3 3 0 1 0 10 7', '#977'),
	snapgray: ln('M0 4C3 0 9 1 12 7', '#888', 3) + box(11, 8, 4, 7, '#999') + fl('M0 2L6 1L5 7z', '#888'),
	marquee: '<rect x="2" y="2" width="12" height="12" fill="none" stroke="#000" stroke-dasharray="3 1"/>' + dot(2, 2, '#e00') + dot(14, 14, '#e00'),
	cubeline: blue + ln('M7 0V10M1 12L7 9L15 12', '#f66', .8),
	tree: box(1, 1, 5, 6, '#fd0', '#996') + box(7, 10, 5, 4, '#fd0', '#996') + ln('M6 7H16M3 8V14M3 12H7M12 13H16', '#333'),
	tree2: box(1, 1, 4, 5, '#fbb', '#966') + box(7, 10, 4, 4, '#fee', '#a66') + ln('M5 7H16M3 7V14M3 12H7M12 14H16', '#555'),
	reuse: ln('M4 3V14', '#36c', 5) + ln('M4 3V14', '#9cf', 3) + fl('M8 2H15V14H9V10H12V6H8z', '#fc3') + dot(12, 4, '#a60', 1) + dot(13, 12, '#a60', 1),
	radio: dot(5, 11, '#06c', 5) + ln('M5 10V14M5 7.500V9', '#fff', 2) + ln('M7 5C9 5 11 7 12 10M7 2C11 2 14 5 15 9', '#36c', 1.3),
	web: fl('M3 1H11L15 5V15H3z', '#ff9') + ln('M3 1H11L15 5V15H3z', '#99c') + dot(8, 9, '#36c', 4) + fl('M5 7L9 6L8 10L6 11z', '#3a3'),
	clock: dot(8, 8, '#666', 7.5) + dot(8, 8, '#dff', 5.8) + ln('M8 3V8H12', '#000', 1.3),
	book: fl('M1 3L5 2V14L1 15z', '#fff') + box(5, 2, 10, 12, '#fff', '#888') + ln('M10 5H13M10 8H13M10 11H13', '#66c') + dot(8, 5, '#c33', 1) + dot(8, 8, '#c33', 1) + dot(8, 11, '#393', 1),
	rainbow: box(1, 0, 6, 3, '#f00') + box(1, 3, 6, 3, '#f90') + box(1, 6, 6, 3, '#ff0') + box(1, 9, 6, 4, '#0c3') + box(1, 13, 6, 3, '#09f') + ln('M10 7L15 14', '#33c', 2) + dot(10, 5, '#ff6', 2.5),
	wizard: box(2, 2, 4, 11, '#36c') + ln('M6 7L10 9', '#333', 2) + ln('M10 7L15 14M13 5L7 13', '#33a', 1.8) + dot(10, 3, '#ef6', 2.5) + dot(4, 14, '#fc3', 1.5),
	people: dot(11, 3, '#c73', 3) + fl('M6 11C7 5 15 5 16 11z', '#393') + dot(5, 8, '#a53', 3) + fl('M0 16C0 10 9 10 10 16z', '#96c'),
	picture: box(0.5, 2.5, 15, 12, '#39f', '#333') + fl('M1 10L4 7L8 10L11 8L15 11V14H1z', '#fff') + fl('M1 14L5 11L9 13L13 11L15 14z', '#99c') + dot(12, 5, '#ff0', 1.8),
	form: fl('M3 3H9L13 6V14L4 12z', '#fff') + ln('M3 3H9L13 6V14L4 12z', '#000') + ln('M4 4H9L12 7', '#0cc', 1.5),
	wan: ln('M2 3L15 2M5 7H13L11 13L8 13M7 3C7 8 6 11 2 14', '#39f', 1.8),
	moon: fl('M10 1C16 6 14 15 7 15C4 15 2 14 1 11C7 13 12 8 10 1', '#69c'),
	punct: ln('M4 2A2 2 0 1 0 4 6A2 2 0 1 0 4 2', '#69c', 1.5) + fl('M10 10H13L12 15L10 16L11 13H10z', '#69c'),
	user: dot(8, 4, '#bbb', 3.5) + fl('M5 8H11L14 15H2z', '#bbb'),
	keys: '<rect x="1" y="3" width="14" height="10" rx="1" fill="#fff" stroke="#69c" stroke-width="1.5"/>' + '<path d="M3 5.500H13M3 8H13" stroke="#69c" stroke-width="1.5" stroke-dasharray="1.500 .6"/>' + ln('M5 11H11', '#69c'),
	ie: ln('M13 11C10 16 3 13 3 8C3 2 13 2 13 8H4', '#58b', 2.4) + ln('M2 14C-1 11 10 1 15 3', '#69c', 1.3),
	gif: box(1, 3, 14, 12, '#fff', '#033') + box(8, 1, 7, 4, '#399', '#033') + ln('M2 8H14M3 6H7', '#033', 1.3) + ln('M5 10H3V13H5V12M9 10H7V13H9V12M13 10H11V13H13V12', '#033')
};

function svg(name) {
	return '<svg viewBox="0 0 16 16" aria-hidden="true">' + icons[name] + '</svg>';
}

var aIcon = document.querySelectorAll('[data-icon]');
for (var i = 0; i < aIcon.length; i++) {
	aIcon[i].innerHTML = svg(aIcon[i].getAttribute('data-icon'));
}

// | 分隔线  v 箭头  _ 低位箭头  . 空位  » 更多  * 选中
var aTools = document.querySelectorAll('[data-tools]');
for (var i = 0; i < aTools.length; i++) {
	var list = aTools[i].getAttribute('data-tools').split(' ');
	var str = '';
	for (var j = 0; j < list.length; j++) {
		var t = list[j];
		if (t == '|') {
			str += '<i class="sep"></i>';
		} else if (t == 'v') {
			str += '<i class="arrow"></i>';
		} else if (t == '_') {
			str += '<i class="arrow low"></i>';
		} else if (t == '.') {
			str += '<i class="space"></i>';
		} else if (t == '»') {
			str += '<button class="more">»<i class="arrow"></i></button>';
		} else if (t.charAt(0) == '*') {
			str += '<button class="tool selected" aria-label="' + t.slice(1) + '">' + svg(t.slice(1)) + '</button>';
		} else {
			str += '<button class="tool" aria-label="' + t + '">' + svg(t) + '</button>';
		}
	}
	aTools[i].innerHTML = str;
}

// 针齿
var oGear = document.getElementById('gear');
var str = '';
for (var i = 0; i < 18; i++) {
	var a = i * Math.PI / 9;
	var x = 141 + 50 * Math.sin(a);
	var y = 53 - 49 * Math.cos(a);
	str += '<circle cx="' + x + '" cy="' + y + '" r="4.5" stroke="#777" stroke-width=".7"/>';
}
oGear.innerHTML += str;
```
